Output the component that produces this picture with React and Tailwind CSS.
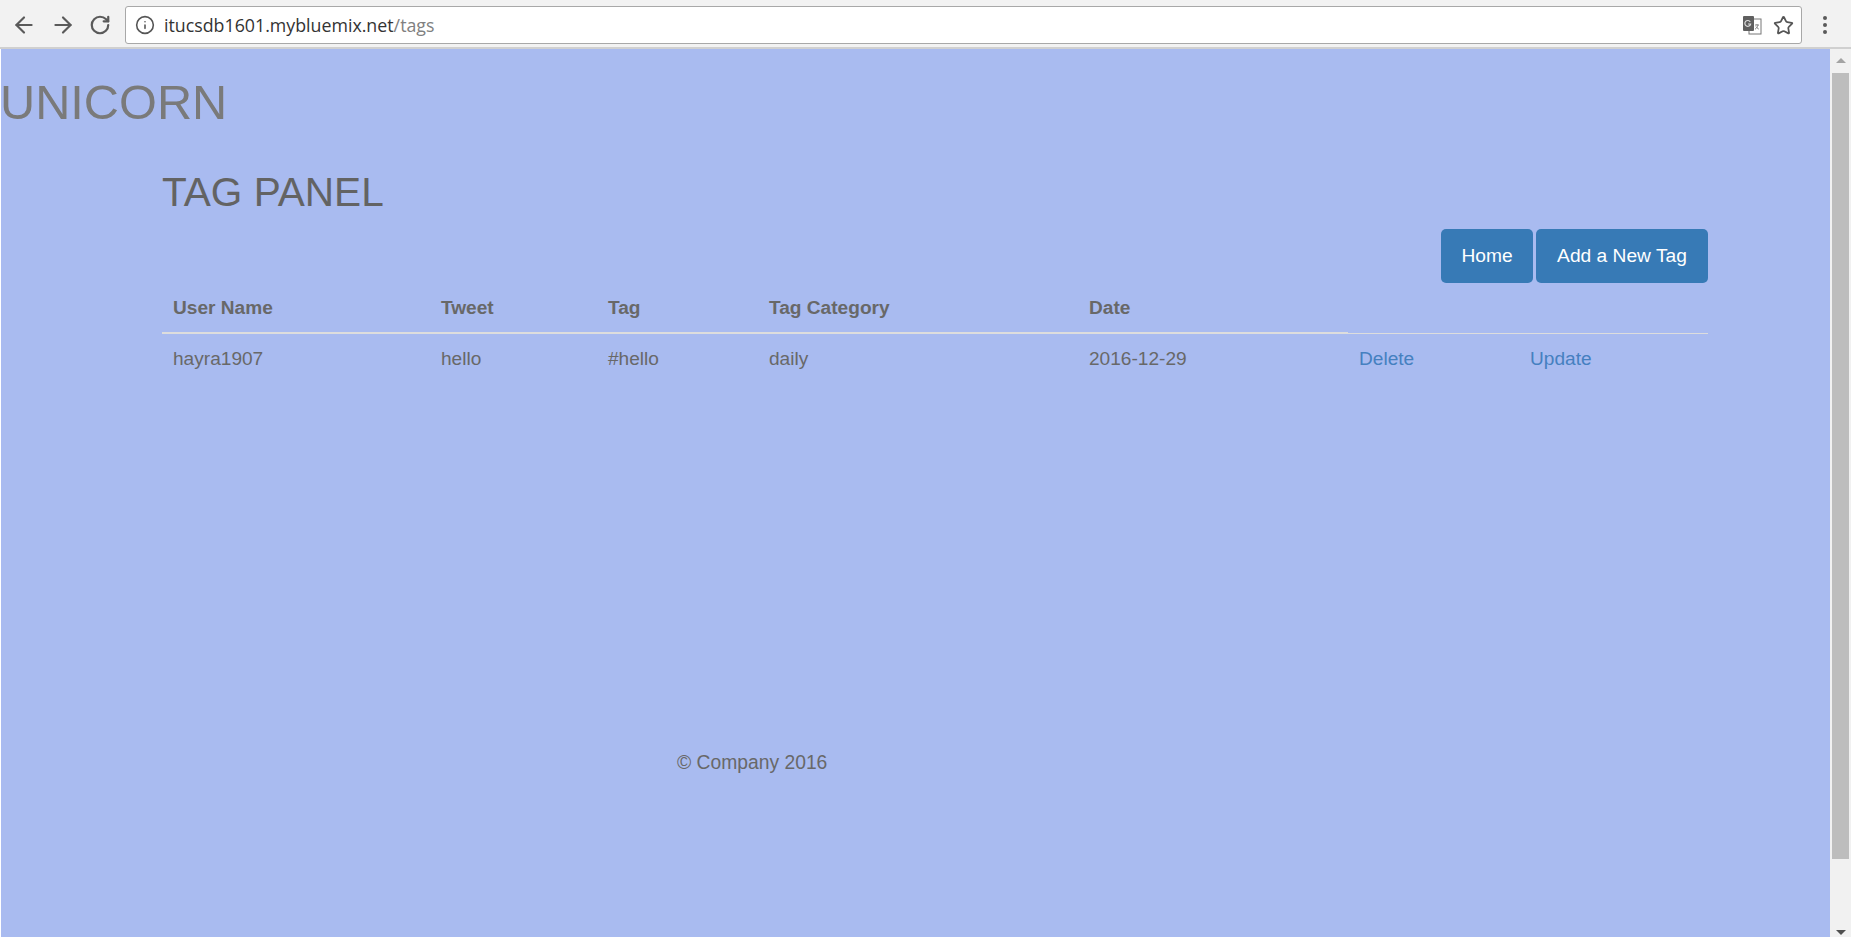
import { ArrowLeft, ArrowRight, RotateCw, Info, Star } from "lucide-react";

const ARIAL = "font-['Liberation_Sans',Arial,sans-serif]";

function TranslateIcon() {
  return (
    <svg width="20" height="20" viewBox="0 0 20 20" className="shrink-0">
      <rect x="7" y="4" width="12" height="15" fill="#fff" stroke="#777" strokeWidth="1" />
      <rect x="1" y="1" width="11" height="15" rx="1" fill="#5f5f5f" />
      <path d="M8.200 6.800A2.900 2.900 0 1 0 8.600 9H6" fill="none" stroke="#ddd" strokeWidth="1.200" />
      <path d="M13 10h4M15 9v1M16 10c-.4 2-1.500 3.400-3 4.200M14 11.500c.6 1.200 1.500 2 2.800 2.600" fill="none" stroke="#888" strokeWidth="1" />
    </svg>
  );
}

function ChromeBar() {
  return (
    <div className="flex h-[49px] shrink-0 items-center border-b-2 border-[#d0d0d0] bg-[#f2f2f2] pt-[3px]">
      <div className="ml-[11px] flex w-[114px] shrink-0 items-center gap-[13px] text-[#5a5a5a]">
        <ArrowLeft size={26} strokeWidth={2} />
        <ArrowRight size={26} strokeWidth={2} />
        <RotateCw size={22} strokeWidth={2.4} />
      </div>
      <div className="flex h-[38px] w-[1677px] shrink-0 items-center rounded-[3px] border border-[#a8a8a8] bg-white pl-[9px] pr-[7px]">
        <Info size={20} strokeWidth={1.9} className="shrink-0 text-[#555]" />
        <span className="ml-[9px] font-['Open_Sans',sans-serif] text-[17.8px] text-[#333]">
          itucsdb1601.mybluemix.net<span className="text-[#808080]">/tags</span>
        </span>
        <div className="ml-auto flex items-center gap-[11px]">
          <TranslateIcon />
          <Star size={21} strokeWidth={2} className="text-[#555]" />
        </div>
      </div>
      <div className="ml-[21px] flex flex-col gap-[3px]">
        <span className="h-[4px] w-[4px] rounded-full bg-[#5a5a5a]" />
        <span className="h-[4px] w-[4px] rounded-full bg-[#5a5a5a]" />
        <span className="h-[4px] w-[4px] rounded-full bg-[#5a5a5a]" />
      </div>
    </div>
  );
}

function Scrollbar() {
  return (
    <div className="flex w-[21px] shrink-0 flex-col items-center bg-[#f1f1f1]">
      <div className="mt-[9px] h-0 w-0 border-x-[5px] border-b-[5px] border-x-transparent border-b-[#a3a3a3]" />
      <div className="mt-[10px] h-[786px] w-[17px] bg-[#bdbdbd]" />
      <div className="mt-auto mb-[2px] h-0 w-0 border-x-[5px] border-t-[5px] border-x-transparent border-t-[#505050]" />
    </div>
  );
}

const headers = ["User Name", "Tweet", "Tag", "Tag Category", "Date"];
const cells = ["hayra1907", "hello", "#hello", "daily", "2016-12-29"];
const widths = ["w-[268px]", "w-[167px]", "w-[161px]", "w-[320px]", "w-[270px]", "w-[171px]", "w-[189px]"];

export default function App() {
  return (
    <div className={`flex h-[937px] w-[1851px] flex-col overflow-hidden bg-white ${ARIAL}`}>
      <ChromeBar />
      <div className="flex min-h-0 flex-1">
        <main className="ml-[1px] min-w-0 flex-1 bg-[#a9bbf0] text-[#686868]">
          <h1 className="mt-[27px] -ml-[1px] text-[48.7px] leading-[53px] font-normal text-[#7a7a7a]">UNICORN</h1>
          <div className="ml-[161px] w-[1546px]">
            <h2 className="mt-[41px] text-[40.6px] leading-[44px] font-normal text-[#636363]">TAG PANEL</h2>
            <div className="mt-[15px] flex justify-end gap-[3px]">
              <a className="flex h-[54px] w-[92px] items-center justify-center rounded-[5px] bg-[#377ab6] text-[19.2px] text-white">Home</a>
              <a className="flex h-[54px] w-[172px] items-center justify-center rounded-[5px] bg-[#377ab6] text-[19.2px] text-white">Add a New Tag</a>
            </div>
            <table className="w-full table-fixed border-collapse text-[19.1px]">
              <colgroup>
                {widths.map((w, i) => <col key={i} className={w} />)}
              </colgroup>
              <thead>
                <tr className="h-[50px]">
                  {headers.map((h) => (
                    <th key={h} className="border-b-2 border-[#dddddd] px-[11px] pt-[2px] text-left font-bold">{h}</th>
                  ))}
                  <th className="border-b border-[#dddddd]" />
                  <th className="border-b border-[#dddddd]" />
                </tr>
              </thead>
              <tbody>
                <tr className="h-[51px]">
                  {cells.map((c) => <td key={c} className="px-[11px] pt-[1px]">{c}</td>)}
                  <td className="px-[11px] pt-[2px] text-[#4580c0]">Delete</td>
                  <td className="px-[11px] pt-[2px] text-[#4580c0]">Update</td>
                </tr>
              </tbody>
            </table>
            <p className="mt-[366px] ml-[515px] text-[19.3px] leading-[26px]">© Company 2016</p>
          </div>
        </main>
        <Scrollbar />
      </div>
    </div>
  );
}
